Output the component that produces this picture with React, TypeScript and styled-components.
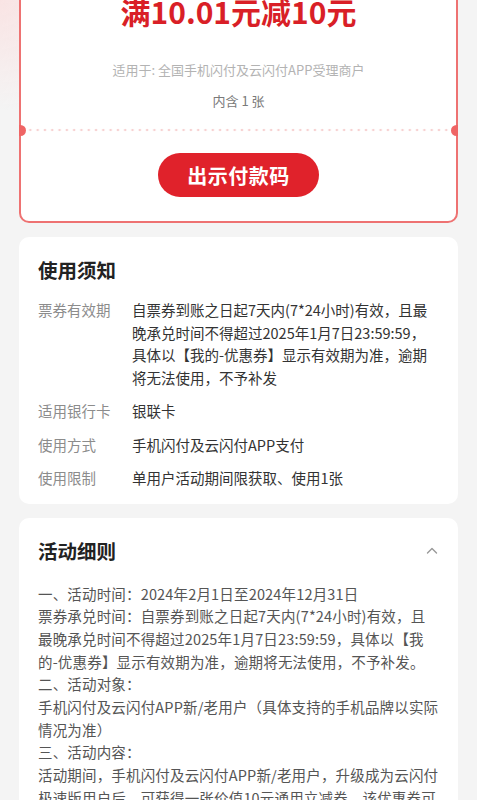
import styled, { createGlobalStyle } from 'styled-components'

const GlobalStyle = createGlobalStyle`
	html, body {
		margin: 0;
		padding: 0;
	}
	body {
		background: #f4f4f4;
		font-family: "Noto Sans CJK SC", "Noto Sans", sans-serif;
		color: #333;
	}
`

interface Rule {
	label: string
	value: string
}

const rules: Rule[] = [
	{
		label: '票券有效期',
		value: '自票券到账之日起7天内(7*24小时)有效，且最晚承兑时间不得超过2025年1月7日23:59:59，具体以【我的-优惠券】显示有效期为准，逾期将无法使用，不予补发',
	},
	{ label: '适用银行卡', value: '银联卡' },
	{ label: '使用方式', value: '手机闪付及云闪付APP支付' },
	{ label: '使用限制', value: '单用户活动期间限获取、使用1张' },
]

const details = [
	'一、活动时间：2024年2月1日至2024年12月31日',
	'票券承兑时间：自票券到账之日起7天内(7*24小时)有效，且最晚承兑时间不得超过2025年1月7日23:59:59，具体以【我的-优惠券】显示有效期为准，逾期将无法使用，不予补发。',
	'二、活动对象：',
	'手机闪付及云闪付APP新/老用户（具体支持的手机品牌以实际情况为准）',
	'三、活动内容：',
	'活动期间，手机闪付及云闪付APP新/老用户，升级成为云闪付极速版用户后，可获得一张价值10元通用立减券，该优惠券可在全国手机闪付及云闪付APP受理商户使用。',
]

const Page = styled.div`
	min-height: 800px;
	padding: 0 19px 40px;
	box-sizing: border-box;
	overflow: hidden;
	background:
		radial-gradient(circle at 0 0, rgba(250, 226, 226, 0.9) 0, rgba(244, 244, 244, 0) 110px),
		#f4f4f4;
`

const CouponCard = styled.div`
	margin-top: -44px;
	padding: 34px 0 24px;
	background: #fff;
	border: 2px solid #ee7272;
	border-radius: 10px;
	display: flex;
	flex-direction: column;
	align-items: center;
`

const Amount = styled.div`
	font-size: 30px;
	line-height: 38px;
	font-weight: 700;
	color: #d91f27;
`

const Scope = styled.div`
	margin-top: 30px;
	font-size: 13px;
	line-height: 20px;
	color: #b3b3b3;
`

const Count = styled.div`
	margin-top: 11px;
	font-size: 13px;
	line-height: 20px;
	color: #7a7a7a;
`

const Divider = styled.div`
	position: relative;
	align-self: stretch;
	height: 4px;
	margin: 17px 0 0;
	background-image: radial-gradient(circle, #f7d2d2 1px, transparent 1.6px);
	background-size: 7.3px 4px;
	background-repeat: repeat-x;
	background-position: 13px 0;
	&::before,
	&::after {
		content: '';
		position: absolute;
		top: -3.5px;
		width: 7px;
		height: 11px;
		background: #ef6565;
	}
	&::before {
		left: -2px;
		border-radius: 0 6px 6px 0;
	}
	&::after {
		right: -2px;
		border-radius: 6px 0 0 6px;
	}
`

const PayButton = styled.button`
	margin-top: 21px;
	width: 161px;
	height: 44px;
	border: none;
	border-radius: 22px;
	background: #e0222b;
	color: #fff;
	font-family: inherit;
	font-size: 20px;
	font-weight: 700;
	letter-spacing: 0.5px;
`

const Panel = styled.section`
	margin-top: 14px;
	padding: 19px 19px 14px;
	background: #fff;
	border-radius: 10px;
	& + & {
		margin-top: 14px;
	}
`

const PanelHead = styled.div`
	display: flex;
	align-items: center;
	justify-content: space-between;
`

const PanelTitle = styled.h2`
	margin: 0;
	font-size: 19.5px;
	line-height: 28px;
	font-weight: 700;
	color: #222;
`

const Chevron = styled.span`
	display: flex;
	color: #999;
`

const RuleList = styled.div`
	margin-top: 15px;
	display: flex;
	flex-direction: column;
	gap: 11px;
`

const RuleRow = styled.div`
	display: grid;
	grid-template-columns: 94px 1fr;
	font-size: 14.5px;
	line-height: 22.5px;
`

const RuleLabel = styled.span`
	color: #8c8c8c;
`

const RuleValue = styled.span`
	color: #333;
`

const DetailBody = styled.div`
	margin-top: 18px;
	font-size: 14.5px;
	line-height: 22.7px;
	letter-spacing: 0.17px;
	color: #555;
	p {
		margin: 0;
	}
`

export default function App() {
	return (
		<>
			<GlobalStyle />
			<Page>
				<CouponCard>
					<Amount>满10.01元减10元</Amount>
					<Scope>适用于: 全国手机闪付及云闪付APP受理商户</Scope>
					<Count>内含 1 张</Count>
					<Divider />
					<PayButton>出示付款码</PayButton>
				</CouponCard>

				<Panel>
					<PanelHead>
						<PanelTitle>使用须知</PanelTitle>
					</PanelHead>
					<RuleList>
						{rules.map((r) => (
							<RuleRow key={r.label}>
								<RuleLabel>{r.label}</RuleLabel>
								<RuleValue>{r.value}</RuleValue>
							</RuleRow>
						))}
					</RuleList>
				</Panel>

				<Panel>
					<PanelHead>
						<PanelTitle>活动细则</PanelTitle>
						<Chevron>
							<svg width="14" height="14" viewBox="0 0 14 14" fill="none">
								<path d="M2.5 9 L7 4.5 L11.5 9" stroke="currentColor" strokeWidth="1.4" strokeLinecap="round" strokeLinejoin="round" />
							</svg>
						</Chevron>
					</PanelHead>
					<DetailBody>
						{details.map((d) => (
							<p key={d}>{d}</p>
						))}
					</DetailBody>
				</Panel>
			</Page>
		</>
	)
}
